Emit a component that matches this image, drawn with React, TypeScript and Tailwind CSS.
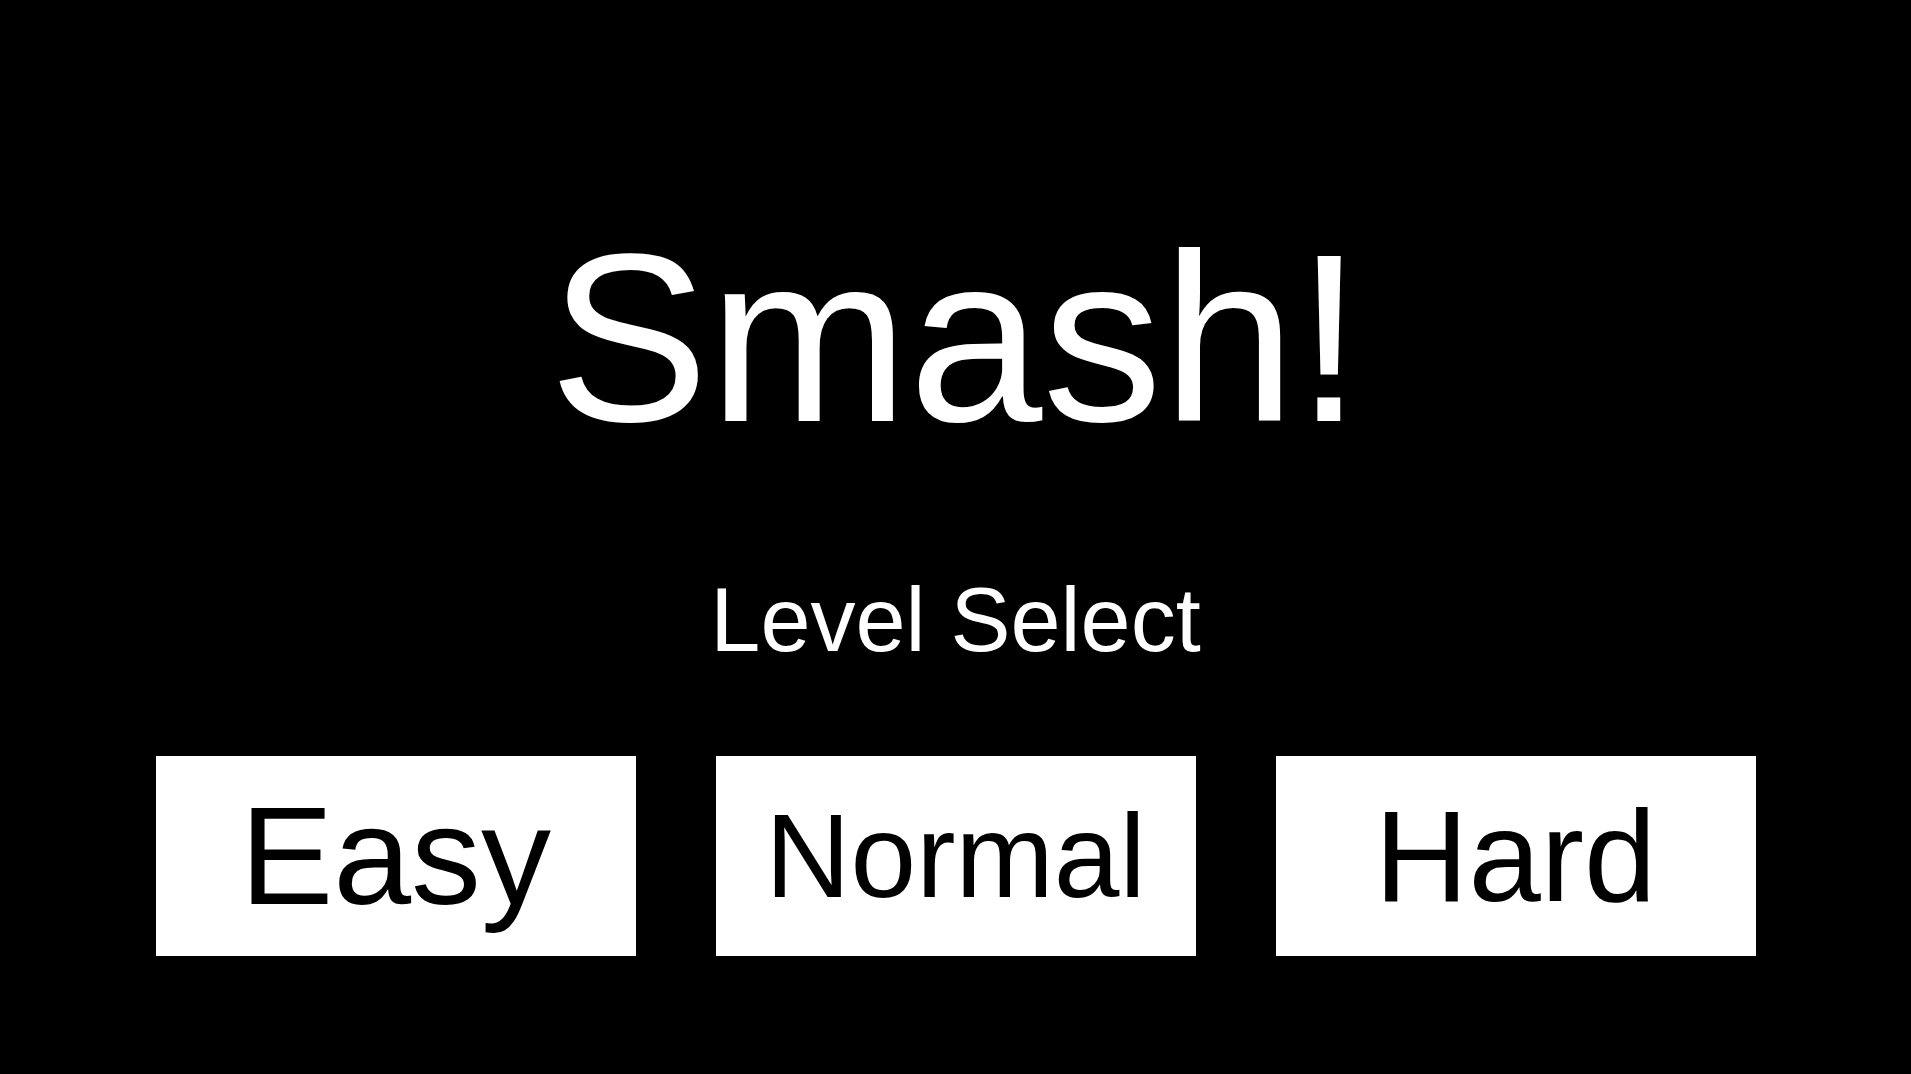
const levels = [
  { name: "Easy", size: "text-[140px]" },
  { name: "Normal", size: "text-[118px]" },
  { name: "Hard", size: "text-[130px]" },
];

export default function App() {
  return (
    <main
      className="min-h-screen w-full bg-black flex flex-col items-center pt-[218px]"
      style={{ fontFamily: '"Liberation Sans", Arial, sans-serif' }}
    >
      <h1 className="text-[240px] leading-none text-white font-normal">Smash!</h1>

      <h2 className="mt-[117px] text-[90px] leading-none text-white font-normal">
        Level Select
      </h2>

      <div className="mt-[91px] flex gap-[80px]">
        {levels.map((level) => (
          <button
            key={level.name}
            className={`w-[480px] h-[200px] bg-white text-black flex items-center justify-center leading-none ${level.size}`}
          >
            {level.name}
          </button>
        ))}
      </div>
    </main>
  );
}
